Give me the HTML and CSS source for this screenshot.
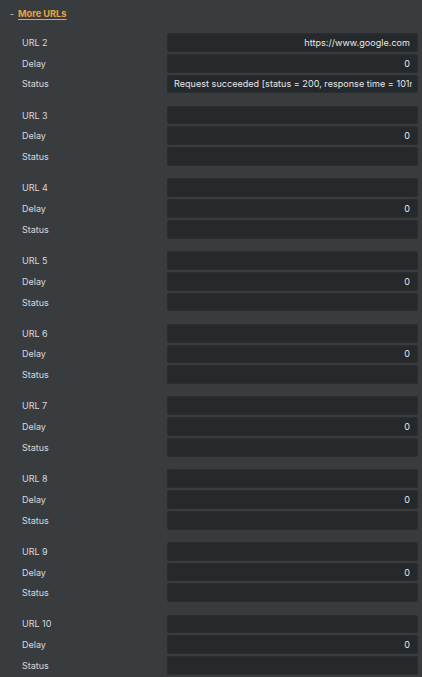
FILE: index.html
```html
<!DOCTYPE html>
<html>
<head>
<meta charset="utf-8">
<link rel="stylesheet" href="styles.css">
</head>
<body>
<div class="panel">
  <div class="header"><span class="dash">-</span><a class="title">More URLs</a></div>
  <div class="groups">
    <div class="group">
      <div class="row"><span class="label">URL 2</span><div class="field right"><span class="val">https://www.google.com</span></div></div>
      <div class="row"><span class="label">Delay</span><div class="field right"><span class="val">0</span></div></div>
      <div class="row"><span class="label">Status</span><div class="field"><span class="val">Request succeeded [status = 200, response time = 101ms]</span></div></div>
    </div>
    <div class="group">
      <div class="row"><span class="label">URL 3</span><div class="field right"><span class="val"></span></div></div>
      <div class="row"><span class="label">Delay</span><div class="field right"><span class="val">0</span></div></div>
      <div class="row"><span class="label">Status</span><div class="field"><span class="val"></span></div></div>
    </div>
    <div class="group">
      <div class="row"><span class="label">URL 4</span><div class="field right"><span class="val"></span></div></div>
      <div class="row"><span class="label">Delay</span><div class="field right"><span class="val">0</span></div></div>
      <div class="row"><span class="label">Status</span><div class="field"><span class="val"></span></div></div>
    </div>
    <div class="group">
      <div class="row"><span class="label">URL 5</span><div class="field right"><span class="val"></span></div></div>
      <div class="row"><span class="label">Delay</span><div class="field right"><span class="val">0</span></div></div>
      <div class="row"><span class="label">Status</span><div class="field"><span class="val"></span></div></div>
    </div>
    <div class="group">
      <div class="row"><span class="label">URL 6</span><div class="field right"><span class="val"></span></div></div>
      <div class="row"><span class="label">Delay</span><div class="field right"><span class="val">0</span></div></div>
      <div class="row"><span class="label">Status</span><div class="field"><span class="val"></span></div></div>
    </div>
    <div class="group">
      <div class="row"><span class="label">URL 7</span><div class="field right"><span class="val"></span></div></div>
      <div class="row"><span class="label">Delay</span><div class="field right"><span class="val">0</span></div></div>
      <div class="row"><span class="label">Status</span><div class="field"><span class="val"></span></div></div>
    </div>
    <div class="group">
      <div class="row"><span class="label">URL 8</span><div class="field right"><span class="val"></span></div></div>
      <div class="row"><span class="label">Delay</span><div class="field right"><span class="val">0</span></div></div>
      <div class="row"><span class="label">Status</span><div class="field"><span class="val"></span></div></div>
    </div>
    <div class="group">
      <div class="row"><span class="label">URL 9</span><div class="field right"><span class="val"></span></div></div>
      <div class="row"><span class="label">Delay</span><div class="field right"><span class="val">0</span></div></div>
      <div class="row"><span class="label">Status</span><div class="field"><span class="val"></span></div></div>
    </div>
    <div class="group">
      <div class="row"><span class="label">URL 10</span><div class="field right"><span class="val"></span></div></div>
      <div class="row"><span class="label">Delay</span><div class="field right"><span class="val">0</span></div></div>
      <div class="row"><span class="label">Status</span><div class="field"><span class="val"></span></div></div>
    </div>
  </div>
</div>
</body>
</html>
```
FILE: styles.css
```css
html, body {
  margin: 0;
  padding: 0;
  background: #383c3f;
  height: 100%;
  overflow: hidden;
}
body {
  font-family: Inter, "Noto Sans", sans-serif;
  font-size: 9px;
  color: #d6d7d8;
}
.panel {
  padding: 8px 4px 0 10px;
}
.header {
  display: flex;
  align-items: center;
  height: 12px;
  line-height: 12px;
  margin-bottom: 13px;
}
.dash {
  color: #c9cacb;
  width: 8px;
}
.title {
  color: #eba43d;
  font-weight: 700;
  font-size: 9.2px;
  text-decoration: underline;
  text-underline-offset: 2px;
}
.groups {
  display: flex;
  flex-direction: column;
  gap: 12.3px;
}
.group {
  display: flex;
  flex-direction: column;
  gap: 2px;
}
.row {
  display: grid;
  grid-template-columns: 145px 1fr;
  align-items: center;
  padding-left: 12px;
  height: 18.8px;
}
.label {
  color: #d8d9da;
}
.field {
  height: 18.8px;
  background: #26292b;
  border-radius: 3px;
  box-shadow: inset 0 0 0 1px #2b2e30;
  padding: 0 6px 0 7px;
  display: flex;
  align-items: center;
  overflow: hidden;
}
.field.right {
  justify-content: flex-end;
  padding-right: 8px;
}
.val {
  color: #e6e7e8;
  white-space: nowrap;
  overflow: hidden;
  min-width: 0;
  flex: 0 1 auto;
  letter-spacing: 0.05px;
}
```
